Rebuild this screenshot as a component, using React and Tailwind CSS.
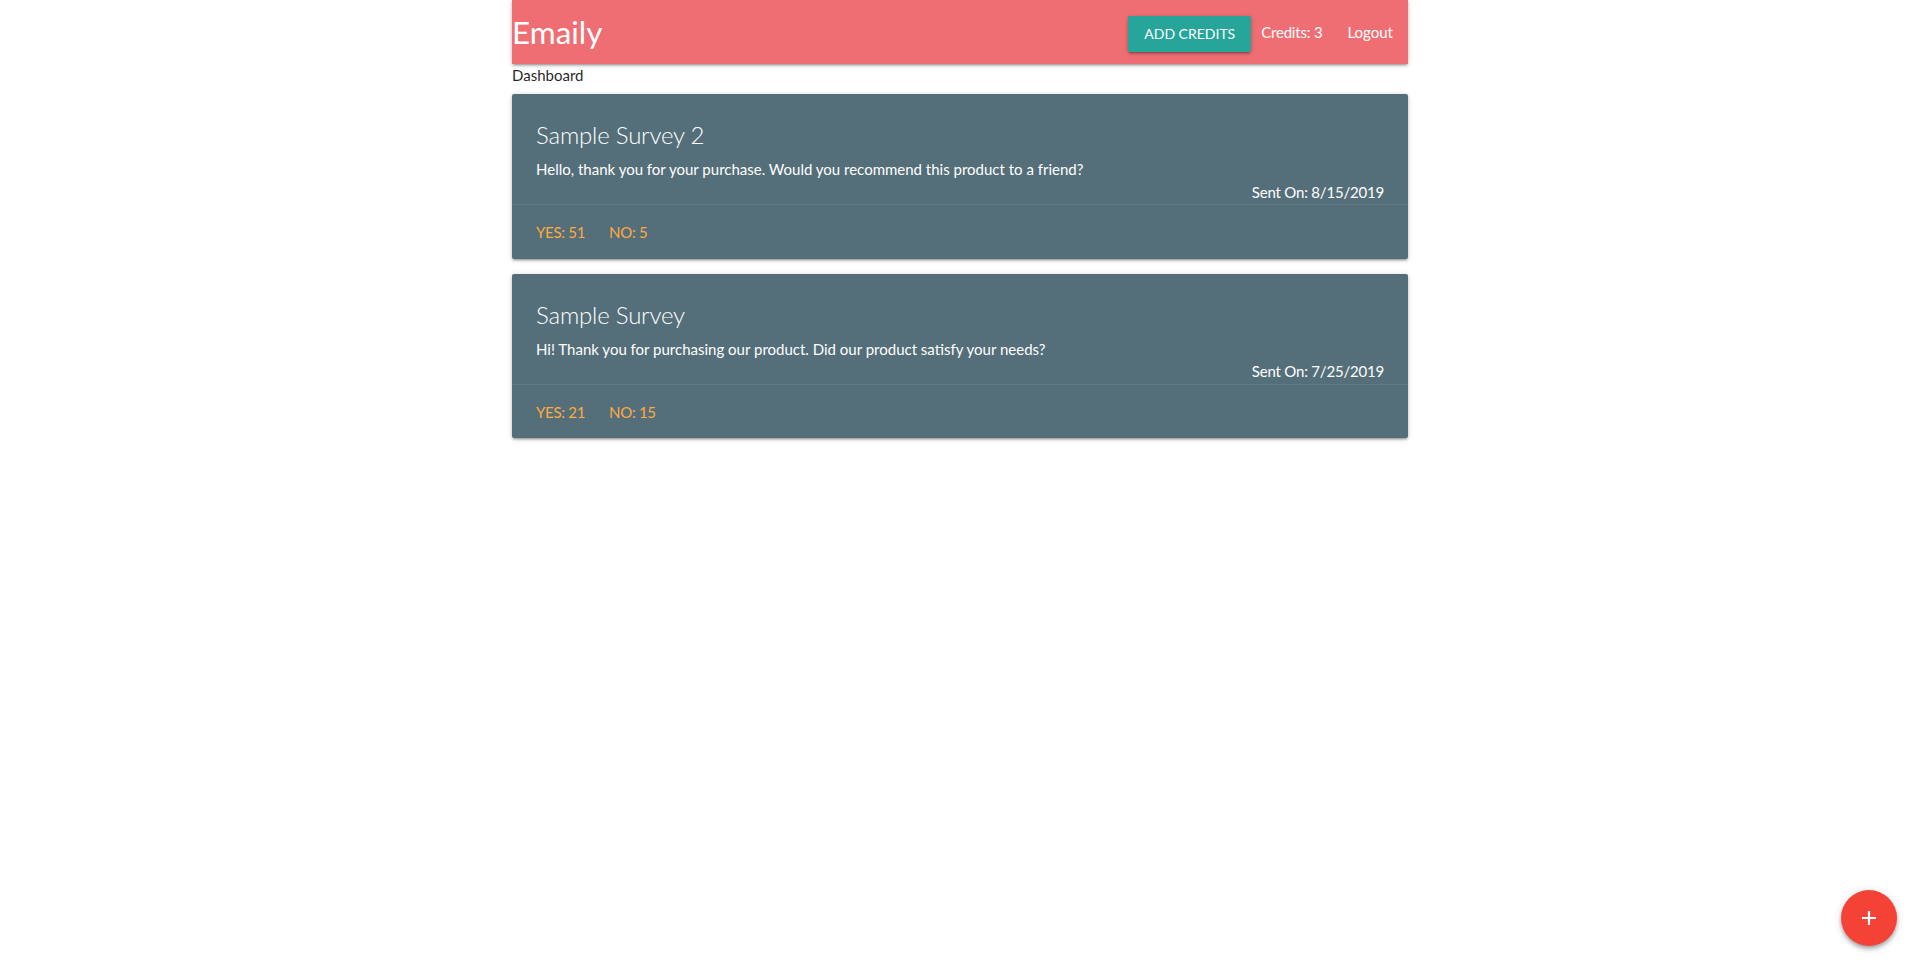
import React from "react";

const font = { fontFamily: "Lato, 'Open Sans', sans-serif" };

function Card({ title, body, date, yes, no }) {
  return (
    <div className="mt-[7.5px] mb-[15px] bg-[#546e7a] text-white rounded-[2px] shadow-[0_2px_2px_0_rgba(0,0,0,0.14),0_3px_1px_-2px_rgba(0,0,0,0.12),0_1px_5px_0_rgba(0,0,0,0.2)]">
      <div className="px-6 pt-[25px] pb-6 h-[110px]">
        <div className="text-[24px] leading-8 font-light mb-[7px] tracking-[-0.2px]">{title}</div>
        <p className="text-[15px] leading-[22.5px]">{body}</p>
        <p className="text-[15px] leading-[22.5px] text-right tracking-[-0.2px]">{date}</p>
      </div>
      <div className="border-t border-[rgba(160,160,160,0.2)] px-6 pt-4 pb-[15px] flex text-[15px] leading-[22.5px] text-[#ffab40] uppercase tracking-[-0.3px]">
        <span className="mr-6">{yes}</span>
        <span className="mr-6">{no}</span>
      </div>
    </div>
  );
}

export default function App() {
  return (
    <div className="min-h-[969px] bg-white text-[15px] leading-[22.5px] text-[rgba(0,0,0,0.87)]" style={font}>
      <div className="w-[896px] mx-auto">
        <nav className="h-16 bg-[#ef6e73] text-white flex items-center shadow-[0_2px_2px_0_rgba(0,0,0,0.14),0_3px_1px_-2px_rgba(0,0,0,0.12),0_1px_5px_0_rgba(0,0,0,0.2)]">
          <a className="text-[31.5px] leading-[64px]">Emaily</a>
          <div className="ml-auto flex items-center h-16 text-[15px]">
            <button className="h-9 mt-[4px] px-4 bg-[#26a69a] text-white text-[14px] uppercase rounded-[2px] shadow-[0_2px_2px_0_rgba(0,0,0,0.14),0_3px_1px_-2px_rgba(0,0,0,0.12),0_1px_5px_0_rgba(0,0,0,0.2)]">
              Add Credits
            </button>
            <span className="mx-[10px] tracking-[-0.2px]">Credits: 3</span>
            <a className="px-[15px]">Logout</a>
          </div>
        </nav>
        <div>Dashboard</div>
        <Card
          title="Sample Survey 2"
          body="Hello, thank you for your purchase. Would you recommend this product to a friend?"
          date="Sent On: 8/15/2019"
          yes="Yes: 51"
          no="No: 5"
        />
        <Card
          title="Sample Survey"
          body="Hi! Thank you for purchasing our product. Did our product satisfy your needs?"
          date="Sent On: 7/25/2019"
          yes="Yes: 21"
          no="No: 15"
        />
      </div>
      <button className="fixed right-[23px] bottom-[23px] w-14 h-14 rounded-full bg-[#f44336] text-white flex items-center justify-center shadow-[0_4px_5px_0_rgba(0,0,0,0.14),0_1px_10px_0_rgba(0,0,0,0.12),0_2px_4px_-1px_rgba(0,0,0,0.3)]">
        <svg width="18" height="18" viewBox="0 0 18 18"><path d="M9 2v14M2 9h14" stroke="white" strokeWidth="2.2" /></svg>
      </button>
    </div>
  );
}
